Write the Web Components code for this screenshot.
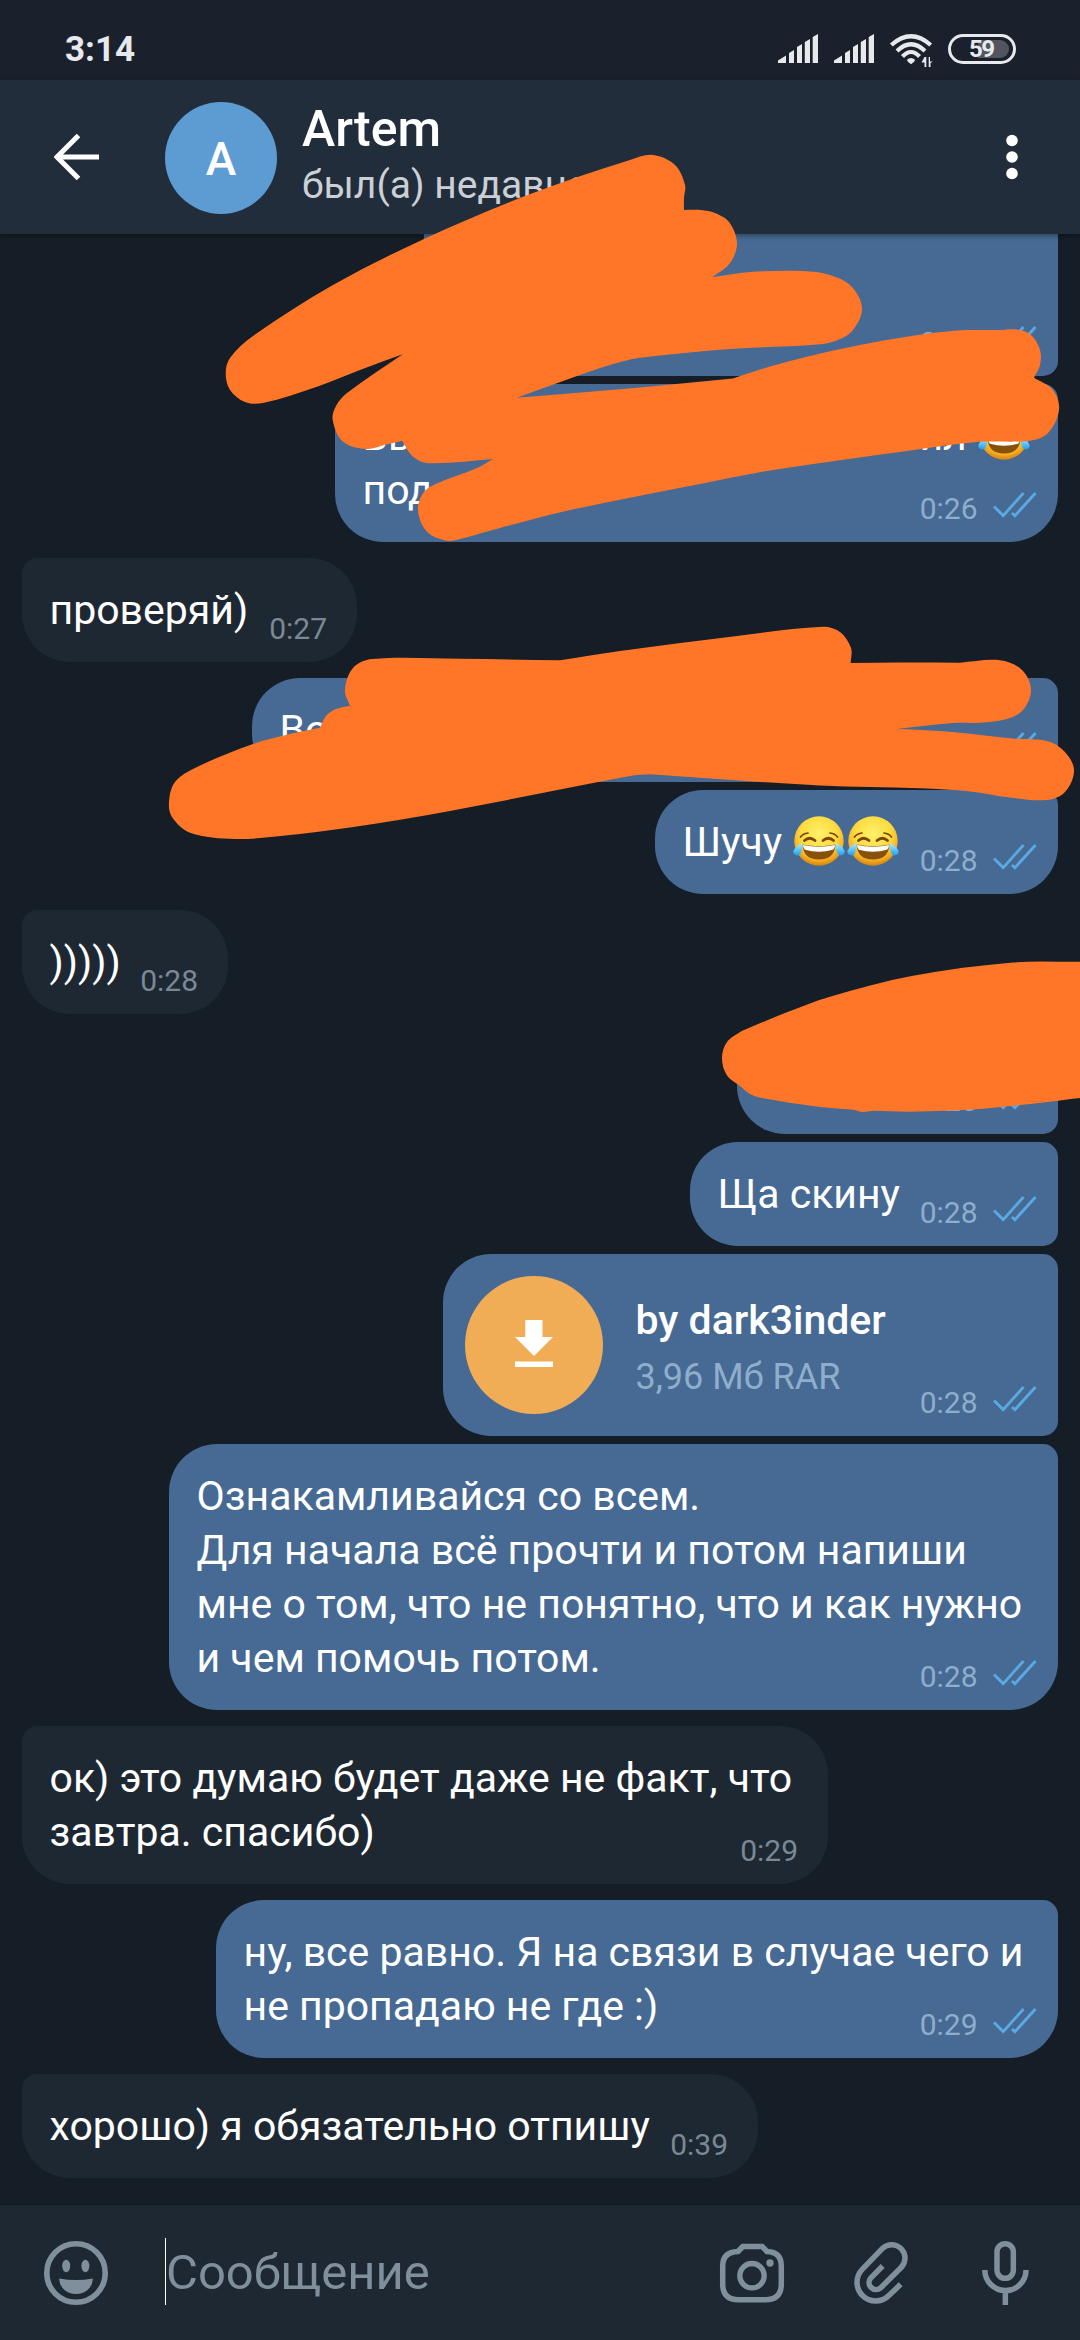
<!DOCTYPE html>
<html lang="ru">
<head>
<meta charset="utf-8">
<title>Artem</title>
<style>
html,body{margin:0;background:#151d26}
body{font-family:Roboto,"Noto Sans",sans-serif;color:#fff;width:1080px;height:2340px;overflow:hidden}
</style>
</head>
<body>
<chat-screen>
  <status-bar slot="top" time="3:14" battery="59"></status-bar>
  <chat-header slot="top" initial="A"><span slot="name">Artem</span><span slot="status">был(а) недавно</span></chat-header>
  <chat-bubble out tail="mid" flush time="0:26" style="--w:634px;--h:142px;--tl:0;--tr:0"></chat-bubble>
  <chat-bubble out near time="0:26" style="--w:723px"><text-line><span>Вы</span><span slot="end">ил <joy-face></joy-face></span></text-line>под</chat-bubble>
  <chat-bubble time="0:27" style="--w:335px">проверяй)</chat-bubble>
  <chat-bubble out tail="mid" time="0:28" style="--w:806px">Во</chat-bubble>
  <chat-bubble out near time="0:28" style="--w:403px">Шучу <joy-face></joy-face><joy-face></joy-face></chat-bubble>
  <chat-bubble time="0:28" style="--w:206px">)))))</chat-bubble>
  <chat-bubble out tail="mid" time="0:28" style="--w:321px"></chat-bubble>
  <chat-bubble out near tail="mid" time="0:28" style="--w:368px">Ща скину</chat-bubble>
  <chat-bubble out near tail="mid" time="0:28" style="--w:615px;--h:182px;--pad:22px"><file-card><span slot="title">by dark3inder</span><span slot="info">3,96 Мб RAR</span></file-card></chat-bubble>
  <chat-bubble out near time="0:28" style="--w:889px">Ознакамливайся со всем.<br>Для начала всё прочти и потом напиши<br>мне о том, что не понятно, что и как нужно<br>и чем помочь потом.</chat-bubble>
  <chat-bubble time="0:29" style="--w:806px">ок) это думаю будет даже не факт, что<br>завтра. спасибо)</chat-bubble>
  <chat-bubble out time="0:29" style="--w:842px">ну, все равно. Я на связи в случае чего и<br>не пропадаю не где :)</chat-bubble>
  <chat-bubble time="0:39" style="--w:736px">хорошо) я обязательно отпишу</chat-bubble>
  <message-input slot="bottom">Сообщение</message-input>
  <marker-strokes slot="over"></marker-strokes>
</chat-screen>
<script>
const define = (name, html, setup) => customElements.define(name, class extends HTMLElement {
  connectedCallback() {
    if (this.shadowRoot) return;
    const root = this.attachShadow({ mode: 'open' });
    root.innerHTML = html;
    if (setup) setup(this, root);
  }
});

define('chat-screen', `<style>
:host{display:flex;flex-direction:column;width:1080px;height:2340px;position:relative;overflow:hidden;background:#151d26}
main{flex:1;display:flex;flex-direction:column;align-items:flex-start}
</style><slot name="top"></slot><main><slot></slot></main><slot name="bottom"></slot><slot name="over"></slot>`);

define('status-bar', `<style>
:host{display:flex;align-items:flex-start;height:80px;background:#1b212c;color:#e8e9ec;box-sizing:border-box;padding-left:65px}
b{font-size:35px;line-height:41px;padding-top:29px;flex:1}
svg{display:block}
.level{box-sizing:border-box;width:68px;height:30px;margin:34px 64px 0 15px;border:3.2px solid #e8e9ec;border-radius:15px;position:relative;font:700 24px/24px Roboto,sans-serif;letter-spacing:-1.5px;padding-left:18px}
.level i{position:absolute;left:27px;top:3px;width:31px;height:18px;background:#50555f;border-radius:0 9px 9px 0}
.level span{position:relative}
</style><b></b>
<svg width="155" height="80" viewBox="778 0 155 80" fill="#e8e9ec">
<path d="M778 63V60.500L786 55.500V63ZM789 63V53L794 50V63ZM797 63V47L802 44V63ZM804.800 63V42L810 39V63ZM812.700 63V37L818 34V63Z"/>
<path d="M834 63V60.500L842 55.500V63ZM845 63V53L850 50V63ZM853 63V47L858 44V63ZM860.800 63V42L866 39V63ZM868.700 63V37L874 34V63Z"/>
<g fill="none" stroke="#e8e9ec" stroke-width="4.200"><path d="M891.300 45Q911 27.500 930.700 45"/><path d="M897 51Q911 37.500 925 51"/><path d="M902.500 56.500Q911 47.500 919.500 56.500"/></g>
<path d="M906.800 60Q911 56.200 915.200 60Q914.500 62 911 64.300Q907.500 62 906.800 60Z"/>
<path d="M924.500 57H926.300V67H924.500V62.500H921.500ZM928.700 67V57H930V61.500H932.800L930.500 63V67Z"/>
</svg><div class="level"><i></i><span></span></div>`, (el, r) => {
  r.querySelector('b').textContent = el.getAttribute('time');
  r.querySelector('.level span').textContent = el.getAttribute('battery');
});

define('chat-header', `<style>
:host{display:flex;align-items:flex-start;height:154px;background:#222d3b;box-shadow:0 2px 5px rgba(0,0,0,.35);position:relative}
.back{margin:54px 0 0 54px}
.ava{width:112px;height:112px;border-radius:50%;background:#5d9cd3;margin:22px 25px 0 65px;display:flex;justify-content:center;font:500 46px/54px Roboto,sans-serif;box-sizing:border-box;padding-top:30px}
.t{flex:1;display:flex;flex-direction:column}
.n{font-weight:500;font-size:50px;line-height:60px;padding-top:19px;height:60px}
.s{font-size:39px;line-height:46px;color:#cbcfd6;padding-top:3px}
.dots{margin:54px 62px 0 0}
</style>
<svg class="back" width="46" height="46" viewBox="54 134 46 46" fill="none" stroke="#fff" stroke-width="5"><path d="M99 157H58M78.500 135.500L57 157L78.500 178.500"/></svg>
<div class="ava"></div><div class="t"><div class="n"><slot name="name"></slot></div><div class="s"><slot name="status"></slot></div></div>
<svg class="dots" width="12" height="46" viewBox="0 0 12 46" fill="#fff"><circle cx="6" cy="6.500" r="5.800"/><circle cx="6" cy="23" r="5.800"/><circle cx="6" cy="39.500" r="5.800"/></svg>`,
(el, r) => { r.querySelector('.ava').textContent = el.getAttribute('initial'); });

define('chat-bubble', `<style>
:host{display:grid;box-sizing:border-box;flex:none;width:var(--w);height:var(--h,auto);margin:16px 0 0 22px;background:#1e2833;color:#fff;font-size:41px;line-height:54px;border-radius:var(--tl,15px) var(--tr,48px) 48px 48px;--meta:#7a8995}
:host([out]){align-self:flex-end;margin-right:22px;background:#466a93;border-radius:var(--tl,48px) var(--tr,15px) 48px 48px;--meta:#8eaecb}
:host([tail=mid]){border-bottom-right-radius:15px}
:host([near]){margin-top:8px}
:host([flush]){margin-top:0}
.body{grid-area:1/1;padding:var(--pad,25px 27px 25px 27.500px);white-space:nowrap;min-height:54px}
.meta{grid-area:1/1;justify-self:end;align-self:end;display:flex;align-items:flex-start;font-size:30px;line-height:35px;color:var(--meta);padding:0 30px 16px 0}
:host([out]) .meta{padding-right:20px}
svg{display:none;margin:-1px 0 0 14.500px}
:host([out]) svg{display:block}
</style><div class="body"><slot></slot></div><div class="meta"><span></span>
<svg width="46" height="28" viewBox="992 1194 46 28" fill="none" stroke="#5aa9e2" stroke-width="2.900"><path d="M994 1210.500L1003.200 1219.600L1023.500 1197M1012 1217L1014.900 1219.700L1035.500 1197"/></svg></div>`,
(el, r) => { r.querySelector('.meta span').textContent = el.getAttribute('time'); });

define('text-line', `<style>:host{display:flex;justify-content:space-between}</style><slot></slot><slot name="end"></slot>`);

define('joy-face', `<style>:host{display:inline-block;width:54px;height:54px;vertical-align:top;margin-top:-1px}svg{display:block}</style>
<svg width="54" height="54" viewBox="0 0 54 54">
<defs><radialGradient id="f" cx=".5" cy=".35" r=".66"><stop offset="0" stop-color="#fff06a"/><stop offset=".55" stop-color="#fedc3f"/><stop offset=".82" stop-color="#f5ae24"/><stop offset="1" stop-color="#d37f0b"/></radialGradient>
<linearGradient id="d" x1="0" y1="0" x2="0" y2="1"><stop offset="0" stop-color="#b5ecff"/><stop offset="1" stop-color="#1ba2ee"/></linearGradient></defs>
<circle cx="27" cy="27" r="24.700" fill="url(#f)"/>
<g fill="none" stroke="#7a4509" stroke-linecap="round"><path d="M8.500 23Q11 19.500 16 19M45.500 23Q43 19.500 38 19" stroke-width="1.700"/><path d="M12.500 26.500Q17.500 22 23 26.500M31 26.500Q36.500 22 41.500 26.500" stroke-width="2.800"/></g>
<path d="M10.500 30.500Q27 34 43.500 30.500Q42.500 45.500 27 45.500Q11.500 45.500 10.500 30.500Z" fill="#87510b"/>
<path d="M11 31Q27 34.500 43 31Q43 34 41 35.700Q27 40 13 35.700Q11 34 11 31Z" fill="#fff"/>
<path d="M10.500 29Q3 32.500 1.200 37.500A4.200 4.200 0 0 0 8 40.500Q10.500 36.500 10.500 29ZM43.500 29Q51 32.500 52.800 37.500A4.200 4.200 0 0 1 46 40.500Q43.500 36.500 43.500 29Z" fill="url(#d)"/></svg>`);

define('file-card', `<style>
:host{display:flex;align-items:flex-start}
.c{width:138px;height:138px;border-radius:50%;background:#f0ad55;margin-right:32.500px}
svg{display:block}
.t{display:flex;flex-direction:column;padding-top:20px}
.n{font-weight:500;font-size:41px;line-height:48px}
.i{font-size:36px;line-height:42px;color:#8eaecb;margin-top:12px}
</style><div class="c"><svg width="138" height="138" viewBox="465 1276 138 138" fill="#fff"><path d="M525.300 1320H542.500V1337H553L534 1356L515 1337H525.300ZM515 1361.500H553V1367H515Z"/></svg></div>
<div class="t"><div class="n"><slot name="title"></slot></div><div class="i"><slot name="info"></slot></div></div>`);

define('message-input', `<style>
:host{display:flex;align-items:flex-start;height:135px;background:#1e2833;box-shadow:0 -1px 0 #131920;color:#7f8f9b}
svg{display:block;fill:none;stroke:#7f8f9b;margin-top:35px}
.f{flex:1;font-size:49px;line-height:70px;margin:33px 0 0 57px;border-left:1px solid #fff;height:67px}
</style>
<svg width="66" height="68" viewBox="42 2240 66 68" style="margin-left:42px"><circle cx="76" cy="2273" r="29.200" stroke-width="5.600"/><g stroke="none" fill="#7f8f9b"><ellipse cx="66.200" cy="2266" rx="4" ry="6.200"/><ellipse cx="85.400" cy="2266" rx="4" ry="6.200"/><path d="M59 2278.500Q76 2281.500 93 2278.500Q92.500 2286 87.500 2290Q83 2294 76 2294Q69 2294 64.500 2290Q59.500 2286 59 2278.500Z"/></g></svg>
<div class="f"><slot></slot></div>
<svg width="66" height="68" viewBox="719 2240 66 68"><path d="M742.800 2246.500H762.200L767 2251.500Q781.300 2252 781.300 2266V2284Q781.300 2299.700 765.500 2299.700H738.500Q722.700 2299.700 722.700 2284V2266Q722.700 2252 738 2251.500Z" stroke-width="5.500"/><circle cx="752" cy="2275.700" r="12.200" stroke-width="5.300"/><circle cx="770" cy="2263" r="3.700" fill="#7f8f9b" stroke="none"/></svg>
<svg width="60" height="68" viewBox="0 180 180 204" style="margin-left:68px"><path transform="translate(-639 0)" stroke-width="16.500" d="M782 313L746.600 346.600A56 56 0 0 1 667.400 267.400L726.700 205.700A40 40 0 0 1 783.300 262.300L721.800 323.800A21 21 0 0 1 692.200 294.200L728 258"/></svg>
<svg width="60" height="68" viewBox="0 180 180 204" style="margin:35px 46px 0 61px"><path transform="translate(-1002 0)" stroke-width="16.500" d="M1071 215.500A24.500 24.500 0 0 1 1120 215.500V270.500A24.500 24.500 0 0 1 1071 270.500ZM1034.500 270A61.500 61.500 0 0 0 1158 270M1096 331V375"/></svg>`);

/* Each stroke is a closed outline: smooth runs of points that meet at sharp corners. */
const strokes = [
 [[684,210,701,210,715,213,729,222,737,243,730,263,712.3,277.3],
  [712.3,277.3,750,272,803,271,830,275,851,286,862,308,853,330,838,340,818,344.5,730,349,640,357.7,630,359.500,600,368,516.7,397.7],
  [516.7,397.7,640,387.5,733,378.500],
  [733,378.5,770,366.5,806.7,356.7,860,345,906.7,336.7,957,330.500,1000,330],
  [1000,330,1017,329.500,1031,335,1040,350,1040,365,1034,377.7],
  [1034,377.7,1053,390,1059,410,1048,433,1030,440.7,977,442,907,451,773,470,700,484,567,510.7,500,528,460,539,447,540.700,427,531.700,418,510,424,492,438,483,477,468,493,459],
  [493,459,430,463.300,413,456.700,402,440.700],
  [402,440.7,384,445,367,449,343,441.700,332.700,420,336,406,347,393,402.700,354.300],
  [402.7,354.3,360,370,317,386.700,263,403,245,402,230,390,225.700,373,230,358,253,336,333,285,424,239,533,193,630,160,653,155,675,165,685,185,684,198,684,210]],
 [[350,705.7,345,690,353,668,372,659,460,658.800,560,660.300],
  [560,660.3,620,651,737,636,823,626.700,840,632,851,648,850.700,663],
  [850.7,663,900,662.500,960,662.700],
  [960,662.7,1000,660.300,1022,670,1031,690,1023,710,1007,719,980,722.700,953,723,897.700,728.700],
  [897.7,728.7,953,732,1013,738.500,1047,741,1064,751,1074,770,1065,792,1047,800,1010,797.500,970,791.500,920,788.300,820,785.500,650,774.300],
  [650,774.3,630,776,450,811,350,827.500,283,835.700,235,839,190,832.700,172,817,169,802,175,782,197,767,253,744,290,734,320,727.700],
  [320,727.7,326,716,336,709,350,705.700]],
 [[741.7,1031,785,1013,830,996.700,913,975.700,1013,962.500,1080,961.700],
  [1080,961.7,1081,1098],
  [1081,1098,1058,1100.700,980,1109,910,1111.700,873,1110.700,863,1112,853,1109.700,820,1107,761.700,1098,750,1094,740,1086],
  [740,1086,726.700,1075,722,1058,727,1042,741.700,1031]]
];
const smooth = run => {
  const p = [];
  for (let i = 0; i < run.length; i += 2) p.push([run[i], run[i + 1]]);
  let d = '';
  for (let i = 0; i < p.length - 1; i++) {
    const a = p[i - 1] || p[i], b = p[i], c = p[i + 1], e = p[i + 2] || c;
    const len = Math.hypot(c[0] - b[0], c[1] - b[1]) / 3;
    const t = (u, v) => { const l = Math.hypot(v[0] - u[0], v[1] - u[1]) || 1; return [(v[0] - u[0]) / l * len, (v[1] - u[1]) / l * len]; };
    const m = t(a, c), n = t(b, e);
    d += `C${b[0] + m[0]} ${b[1] + m[1]} ${c[0] - n[0]} ${c[1] - n[1]} ${c[0]} ${c[1]}`;
  }
  return d;
};
define('marker-strokes', `<style>:host{display:block;position:absolute;inset:0;pointer-events:none}svg{display:block}</style><svg width="1080" height="2340" fill="#ff7629"></svg>`, (el, r) => {
  r.querySelector('svg').innerHTML = strokes.map(s => `<path d="M${s[0][0]} ${s[0][1]}${s.map(smooth).join('')}Z"/>`).join('');
});
</script>
</body>
</html>
